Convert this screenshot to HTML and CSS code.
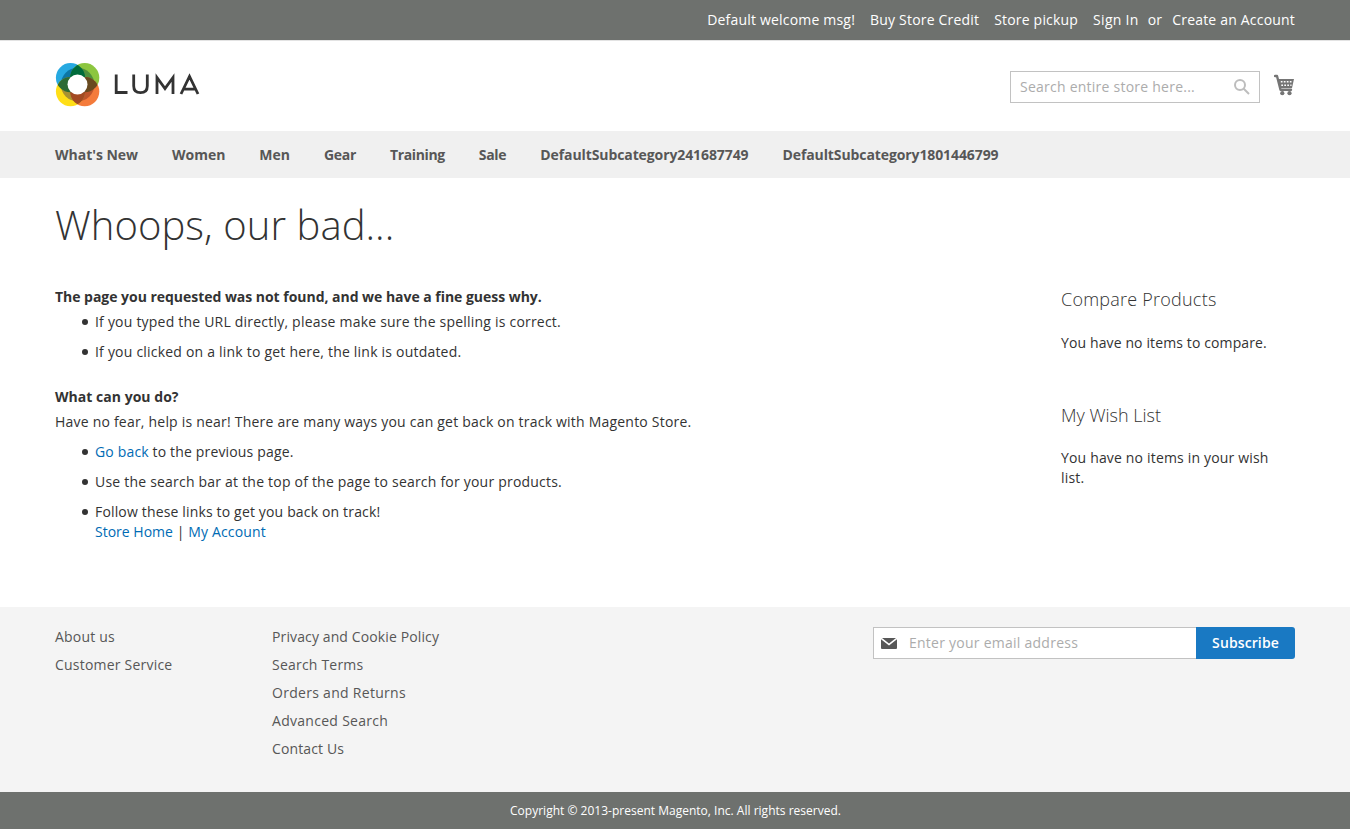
FILE: index.html
```html
<!DOCTYPE html>
<html lang="en">
<head>
<meta charset="utf-8">
<title>404 Not Found</title>
<link rel="stylesheet" href="styles.css">
</head>
<body>
<header>
  <div class="panel"><ul class="wrap panel-links">
    <li>Default welcome msg!</li><li><a href="#">Buy Store Credit</a></li><li><a href="#">Store pickup</a></li><li class="sign-in"><a href="#">Sign In</a></li><li class="or">or</li><li class="create"><a href="#">Create an Account</a></li>
  </ul></div>
  <div class="wrap header-content">
    <a class="logo" href="#" aria-label="Luma">
      <svg width="148" height="46" viewBox="54 62 148 46">
        <defs>
          <clipPath id="blue"><circle cx="70.500" cy="77.700" r="14.600"/></clipPath>
          <clipPath id="green"><circle cx="84.700" cy="77.700" r="14.600"/></clipPath>
          <clipPath id="orange"><circle cx="84.700" cy="91.600" r="14.600"/></clipPath>
          <clipPath id="yellow"><circle cx="70.500" cy="91.600" r="14.600"/></clipPath>
        </defs>
        <circle cx="70.500" cy="77.700" r="14.600" fill="#26a9e1"/>
        <circle cx="84.700" cy="77.700" r="14.600" fill="#8cc63f"/>
        <circle cx="84.700" cy="91.600" r="14.600" fill="#f47b3b"/>
        <circle cx="70.500" cy="91.600" r="14.600" fill="#ffde17"/>
        <circle cx="77.600" cy="84.600" r="16.800" fill="#0d76a4" clip-path="url(#blue)"/>
        <circle cx="77.600" cy="84.600" r="16.800" fill="#4f8f3b" clip-path="url(#green)"/>
        <circle cx="77.600" cy="84.600" r="16.800" fill="#bd552b" clip-path="url(#orange)"/>
        <circle cx="77.600" cy="84.600" r="16.800" fill="#a89232" clip-path="url(#yellow)"/>
        <circle cx="70.500" cy="77.700" r="14.600" fill="#006b3b" clip-path="url(#green)"/>
        <circle cx="70.500" cy="91.600" r="14.600" fill="#a34a22" clip-path="url(#orange)"/>
        <circle cx="70.500" cy="77.700" r="14.600" fill="#2d6b35" clip-path="url(#yellow)"/>
        <circle cx="84.700" cy="77.700" r="14.600" fill="#684a20" clip-path="url(#orange)"/>
        <circle cx="77.500" cy="84.500" r="10" fill="#fff"/>
        <path class="letters" d="M116.200 74.500V92.500H127.500M133.700 74.500V86C133.700 90.500 136 92.700 140.500 92.700S147.300 90.500 147.300 86V74.500M157 94V77.500L165 88.500L173 77.500V94M181 94L189.500 76.500L198 94M184 89.200H195"/>
      </svg>
    </a>
    <div class="tools">
      <div class="search"><input type="text" placeholder="Search entire store here...">
        <svg class="lens" width="16" height="16" viewBox="0 0 16 16"><circle cx="6" cy="6" r="5"/><path d="M9.500 9.500L15 15"/></svg>
      </div>
      <svg class="cart" width="21" height="22" viewBox="0 0 21 22"><path class="line" d="M1 2H3L6.500 15.800H17"/><path d="M3.800 5H20L18 14H6.200Z"/><path class="grid" d="M6.800 7.800H18M7.300 11.200H17.500"/><circle cx="8.300" cy="19.200" r="2.100"/><circle cx="15.500" cy="19.200" r="2.100"/></svg>
    </div>
  </div>
</header>
<nav><div class="wrap nav-links"><a href="#">What's New</a><a href="#">Women</a><a href="#">Men</a><a class="snug" href="#">Gear</a><a class="tight" href="#">Training</a><a class="snug" href="#">Sale</a><a class="long" href="#">DefaultSubcategory241687749</a><a class="long" href="#">DefaultSubcategory1801446799</a></div></nav>
<main class="wrap">
  <h1>Whoops, our bad...</h1>
  <div class="columns">
    <section class="content">
      <h2 class="reason">The page you requested was not found, and we have a fine guess why.</h2>
      <ul class="first"><li>If you typed the URL directly, please make sure the spelling is correct.</li><li>If you clicked on a link to get here, the link is outdated.</li></ul>
      <h2>What can you do?</h2>
      <p>Have no fear, help is near! There are many ways you can get back on track with Magento Store.</p>
      <ul><li class="back"><a href="#">Go back</a> to the previous page.</li><li>Use the search bar at the top of the page to search for your products.</li><li class="follow">Follow these links to get you back on track!<br><span class="links"><a class="home" href="#">Store Home</a> | <a href="#">My Account</a></span></li></ul>
    </section>
    <aside><section class="compare"><h3>Compare Products</h3><p>You have no items to compare.</p></section><section class="wishlist"><h3>My Wish List</h3><p>You have no items in your wish list.</p></section></aside>
  </div>
</main>
<footer><div class="wrap footer-content">
  <ul class="about"><li><a href="#">About us</a></li><li><a href="#">Customer Service</a></li></ul>
  <ul><li class="privacy"><a href="#">Privacy and Cookie Policy</a></li><li><a href="#">Search Terms</a></li><li class="wide"><a href="#">Orders and Returns</a></li><li class="wide"><a href="#">Advanced Search</a></li><li class="privacy"><a href="#">Contact Us</a></li></ul>
  <form class="newsletter"><svg class="mail" width="16" height="11" viewBox="0 0 16 11"><path d="M1 0H15L8 5.500ZM0 1.200L8 7.500L16 1.200V10Q16 11 15 11H1Q0 11 0 10Z"/></svg><input type="email" placeholder="Enter your email address"><button type="button">Subscribe</button></form>
</div></footer>
<small class="copyright">Copyright © 2013-present Magento, Inc. All rights reserved.</small>
</body>
</html>
```
FILE: styles.css
```css
* { box-sizing: border-box; }
body { margin: 0; font: 14px/20px "Open Sans", sans-serif; letter-spacing: .21px; color: #333; background: #fff; }
ul, p, h1, h2, h3 { margin: 0; padding: 0; }
a { color: #006bb4; text-decoration: none; }
.wrap { width: 1240px; margin: 0 auto; }
.panel { height: 40px; background: #6e716e; }
.panel-links { display: flex; justify-content: flex-end; gap: 15px; padding-top: 10px; list-style: none; color: #fff; letter-spacing: .19px; }
.panel-links a { color: #fff; }
.panel-links .sign-in { letter-spacing: .3px; }
.panel-links .or { margin-left: -6px; }
.panel-links .create { margin-left: -5px; }
.header-content { height: 91px; display: flex; justify-content: space-between; }
header { background: linear-gradient(#e3e3e3, #e3e3e3) 0 40px / 100% 1px no-repeat; }
.logo { display: block; height: 46px; margin: 22px 0 0 -1px; }
.logo svg { display: block; }
.letters { fill: none; stroke: #333; stroke-width: 2.8; }
.tools { display: flex; gap: 14px; padding-top: 31px; }
.search { position: relative; width: 250px; height: 32px; }
input { font: 14px/20px "Open Sans", sans-serif; letter-spacing: .24px; border: 1px solid #c2c2c2; height: 32px; padding: 0 9px 2px; outline: 0; background: #fff; }
input::placeholder { color: #acacac; opacity: 1; }
.search input { width: 100%; }
.lens { position: absolute; right: 10px; top: 8px; fill: none; stroke: #bdbdbd; stroke-width: 2; }
.cart { margin-top: 3px; fill: #757575; }
.cart .line { fill: none; stroke: #757575; stroke-width: 2.4; stroke-linecap: round; stroke-linejoin: round; }
.cart .grid { fill: none; stroke: #fff; stroke-width: 1.5; stroke-dasharray: 1.7 1.3; }
nav { height: 47px; background: #f0f0f0; }
.nav-links { display: flex; gap: 34px; padding-top: 14px; letter-spacing: -.02px; }
.nav-links a { color: #575757; font-weight: 700; }
.nav-links .snug { letter-spacing: -.28px; }
.nav-links .tight { letter-spacing: -.39px; }
.nav-links .long { letter-spacing: -.1px; }
main { height: 429px; padding-top: 25px; }
h1 { font-size: 40px; line-height: 44px; font-weight: 300; letter-spacing: .07px; }
.columns { display: flex; justify-content: space-between; padding-top: 40px; }
h2 { font-size: 14px; line-height: 20px; font-weight: 700; margin-bottom: 5px; letter-spacing: .03px; }
.reason { letter-spacing: -.03px; }
.content ul { padding-left: 40px; list-style: none; }
.content li { margin-bottom: 10px; }
.content li::before { content: ""; display: inline-block; width: 6px; height: 6px; margin: 0 7px 0 -13px; border-radius: 50%; background: #333; vertical-align: 2px; }
.content .first { margin-bottom: 25px; }
.content p { margin-bottom: 10px; }
.back, .follow { letter-spacing: .16px; }
.links { letter-spacing: .15px; }
.links .home { letter-spacing: 0; }
aside { width: 234px; padding-right: 20px; }
aside h3 { font-size: 18px; line-height: 24px; font-weight: 300; margin-bottom: 22px; letter-spacing: 0; }
aside section { margin-bottom: 50px; }
.compare h3 { letter-spacing: .23px; }
.compare p { letter-spacing: .12px; }
.wishlist h3 { margin-bottom: 21px; }
.wishlist p { letter-spacing: .17px; }
footer { height: 185px; background: #f4f4f4; }
.footer-content { display: flex; padding-top: 20px; }
.footer-content ul { list-style: none; padding-right: 50px; }
.footer-content .about { width: 217px; }
.footer-content li { margin-bottom: 8px; }
.footer-content li a { color: #575757; }
.privacy { letter-spacing: .12px; }
.wide { letter-spacing: .29px; }
.newsletter { display: flex; width: 422px; margin-left: auto; position: relative; height: 32px; }
.newsletter input { width: 323px; padding-left: 35px; border-right: 0; letter-spacing: .25px; }
.newsletter button { width: 99px; padding: 0; border: 0; border-radius: 0 3px 3px 0; background: #1979c3; color: #fff; font: 600 14px/20px "Open Sans", sans-serif; letter-spacing: .11px; }
.mail { position: absolute; left: 8px; top: 11px; fill: #575757; }
.copyright { display: block; height: 37px; padding-left: 1px; background: #6e716e; color: #fff; text-align: center; font-size: 12px; line-height: 37px; letter-spacing: .01px; }
```
